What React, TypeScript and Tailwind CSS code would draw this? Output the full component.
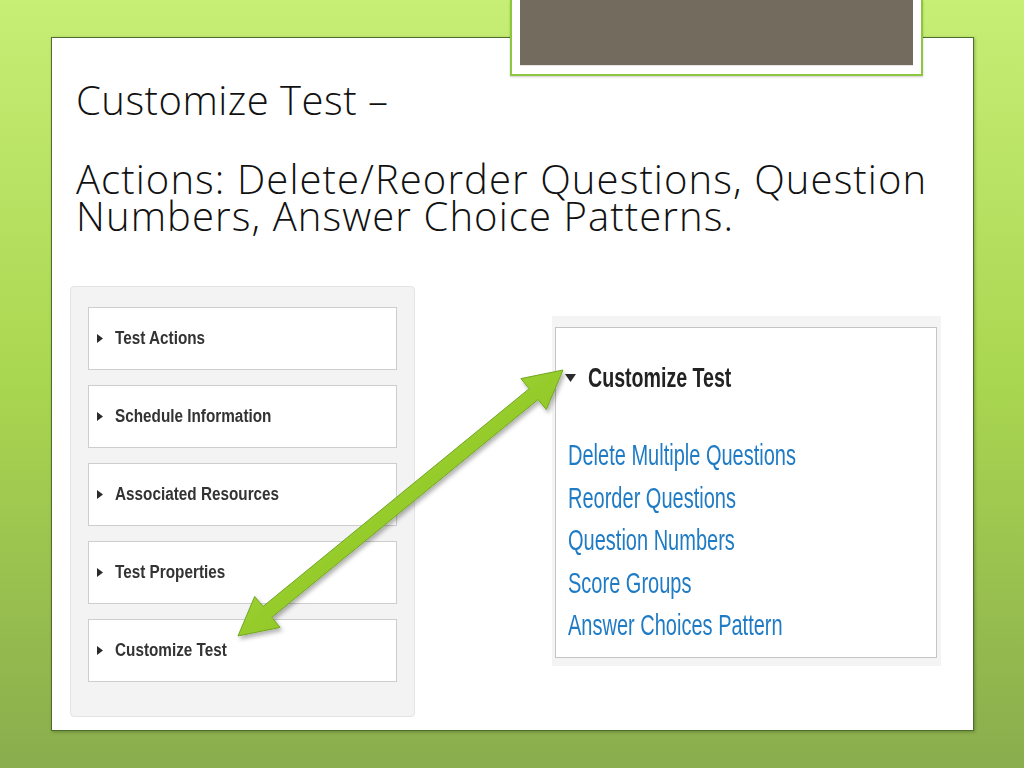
import React from "react";

const SIDE_ITEMS = ["Test Actions", "Schedule Information", "Associated Resources", "Test Properties", "Customize Test"];
const LINKS = ["Delete Multiple Questions", "Reorder Questions", "Question Numbers", "Score Groups", "Answer Choices Pattern"];

function RightTri() {
  return (
    <svg width="6" height="9" viewBox="0 0 6 9" className="shrink-0">
      <polygon points="0,0 6,4.5 0,9" fill="#2b2b2b" />
    </svg>
  );
}

function DownTri() {
  return (
    <svg width="11" height="8" viewBox="0 0 11 8" className="shrink-0">
      <polygon points="0,0 11,0 5.5,8" fill="#2b2b2b" />
    </svg>
  );
}

function Arrow() {
  // double headed arrow linking the two panels, drawn over the slide
  const pts =
    "563,370 546.3,409.6 538,399.5 271.8,617.3 280.1,627.4 238,636 254.7,596.4 263,606.5 529.2,388.7 520.9,378.6";
  return (
    <svg className="pointer-events-none absolute inset-0" width="1024" height="768" viewBox="0 0 1024 768">
      <defs>
        <linearGradient id="ag" x1="0" y1="0" x2="1" y2="1">
          <stop offset="0" stopColor="#b4e24a" />
          <stop offset="0.5" stopColor="#96cc2c" />
          <stop offset="1" stopColor="#74ab1c" />
        </linearGradient>
        <filter id="sh" x="-10%" y="-10%" width="130%" height="130%">
          <feDropShadow dx="2" dy="3" stdDeviation="2" floodColor="#000" floodOpacity="0.3" />
        </filter>
      </defs>
      <polygon points={pts} fill="url(#ag)" stroke="#72a71f" strokeWidth="1" filter="url(#sh)" />
    </svg>
  );
}

export default function App() {
  return (
    <div className="relative h-[768px] w-[1024px] overflow-hidden bg-linear-to-b from-[#c7ee75] via-[#a9d650] to-[#8aad4d] font-['Liberation_Sans',sans-serif]">
      <div className="pl-[51px] pt-[37px]">
        <div className="relative h-[694px] w-[923px] border border-[#4e6e2c] bg-white shadow-[1px_1px_3px_rgba(0,0,0,0.25)]">
          <div className="pl-[24px] pt-[42px] font-['Open_Sans',sans-serif] font-light text-[40px] tracking-[1.1px] text-[#111]">
            <h1 className="leading-[40px] tracking-[0.5px]">Customize Test –</h1>
            <p className="mt-[40px] leading-[37px]">
              Actions: Delete/Reorder Questions, Question
              <br />
              Numbers, Answer Choice Patterns.
            </p>
          </div>

          <div className="mt-[52px] flex items-start">
            <div className="ml-[18px] w-[345px] rounded-[4px] border border-[#e4e4e4] bg-[#f3f3f3] px-[17px] pb-[34px] pt-[20px]">
              <div className="flex flex-col gap-[15px]">
                {SIDE_ITEMS.map((t) => (
                  <div key={t} className="flex h-[63px] items-center gap-[12px] border border-[#cdcdcd] bg-white pl-[8px]">
                    <RightTri />
                    <span className="inline-block origin-left scale-x-[0.85] whitespace-nowrap text-[18px] font-bold text-[#333]">{t}</span>
                  </div>
                ))}
              </div>
            </div>

            <div className="ml-[137px] mt-[30px] h-[350px] w-[389px] bg-[#f4f4f4] pl-[3px] pt-[11px]">
              <div className="h-[331px] w-[382px] border border-[#c4c4c4] bg-white pl-[9px] pt-[34px]">
                <div className="flex h-[32px] items-center gap-[12px]">
                  <DownTri />
                  <span className="inline-block origin-left scale-x-[0.7] whitespace-nowrap text-[28px] font-bold leading-[32px] text-[#222]">Customize Test</span>
                </div>
                <ul className="mt-[40px] pl-[3px]">
                  {LINKS.map((l) => (
                    <li key={l} className="h-[42.5px] leading-[42.5px]">
                      <span className="inline-block origin-left scale-x-[0.667] whitespace-nowrap text-[30px] text-[#1f7bc4]">{l}</span>
                    </li>
                  ))}
                </ul>
              </div>
            </div>
          </div>
        </div>
      </div>

      <div className="absolute left-[510px] top-0 h-[76px] w-[413px] border-2 border-t-0 border-[#8dc63f] bg-white p-[8px] pt-0 shadow-[0_1px_2px_rgba(0,0,0,0.2)]">
        <div className="h-full w-full border-b border-[#e8e4e4] bg-[#736b5e]" />
      </div>

      <Arrow />
    </div>
  );
}
